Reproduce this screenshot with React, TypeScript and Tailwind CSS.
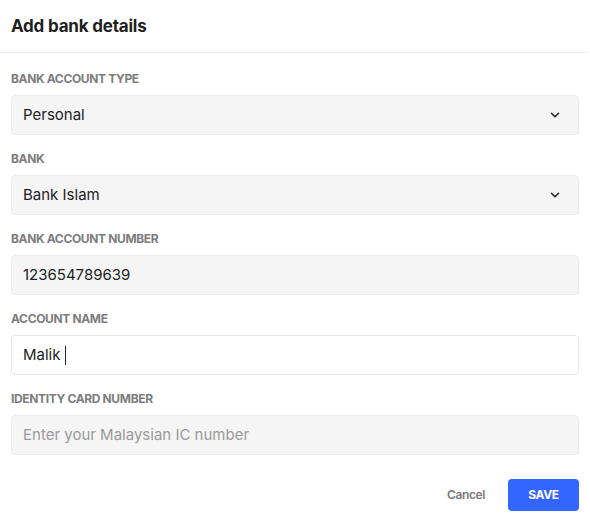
import { ChevronDown } from "lucide-react";

type Field = {
  label: string;
  value?: string;
  placeholder?: string;
  select?: boolean;
  focused?: boolean;
};

const fields: Field[] = [
  { label: "BANK ACCOUNT TYPE", value: "Personal", select: true },
  { label: "BANK", value: "Bank Islam", select: true },
  { label: "BANK ACCOUNT NUMBER", value: "123654789639" },
  { label: "ACCOUNT NAME", value: "Malik", focused: true },
  { label: "IDENTITY CARD NUMBER", placeholder: "Enter your Malaysian IC number" },
];

export default function App() {
  return (
    <div className="w-[590px] h-[522px] bg-white font-['Inter','Liberation_Sans',sans-serif] text-[#222]">
      {/* Header */}
      <div className="h-[53px] px-[11px] flex items-center border-b border-[#ededed] mr-[1px]">
        <h2 className="text-[17px] font-bold tracking-[-0.2px] text-[#1f1f1f] mt-[1px]">
          Add bank details
        </h2>
      </div>

      {/* Body */}
      <div className="px-[11px] pt-[17px]">
        {fields.map((f) => (
          <div key={f.label} className="pb-[15px]">
            <div className="text-[12px] leading-4 font-bold text-[#7d7d7d] tracking-[-0.35px] pt-[1px] pb-[8px]">
              {f.label}
            </div>
            <div
              className={
                "h-[40px] rounded-[4px] border flex items-center px-[11px] text-[15px] " +
                (f.focused
                  ? "bg-white border-[#e6e6e6]"
                  : "bg-[#f5f5f5] border-[#ebebeb]")
              }
            >
              {f.value ? (
                <span className="text-[#222] flex items-center mt-[1px]">
                  {f.value}
                  {f.focused && (
                    <span className="inline-block w-[1px] h-[19px] bg-[#222] ml-[5px]" />
                  )}
                </span>
              ) : (
                <span className="text-[#9a9a9a] mt-[1px]">{f.placeholder}</span>
              )}
              {f.select && (
                <ChevronDown
                  className="ml-auto mr-[5px] text-[#222]"
                  size={14}
                  strokeWidth={2.75}
                />
              )}
            </div>
          </div>
        ))}

        {/* Footer */}
        <div className="flex justify-end items-center gap-[23px] pt-[9px]">
          <button className="text-[12px] font-semibold text-[#7a7a7a] tracking-[-0.4px]">
            Cancel
          </button>
          <button className="w-[71px] h-[32px] rounded-[4px] bg-[#3366ff] text-white text-[12px] font-bold tracking-[-0.3px]">
            SAVE
          </button>
        </div>
      </div>
    </div>
  );
}
